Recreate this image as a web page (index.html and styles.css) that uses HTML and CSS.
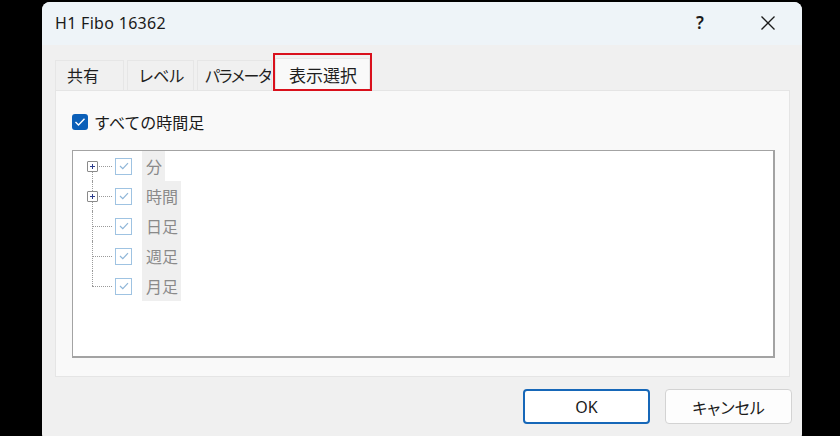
FILE: index.html
```html
<!DOCTYPE html>
<html lang="ja">
<head>
<meta charset="utf-8">
<title>H1 Fibo 16362</title>
<link rel="stylesheet" href="styles.css">
</head>
<body>
<div class="dialog">
  <div class="titlebar">
    <span class="title">H1 Fibo 16362</span>
    <span class="help">?</span>
    <span class="close">
      <svg width="16" height="16" viewBox="0 0 16 16"><path d="M1.5 1.5 L14.5 14.5 M14.5 1.5 L1.5 14.5" stroke="#1a1a1a" stroke-width="1.3" fill="none"/></svg>
    </span>
  </div>
  <div class="content">
    <div class="tabs">
      <div class="tab t1">共有</div>
      <div class="tab t2">レベル</div>
      <div class="tab t3">パラメータ</div>
      <div class="tab t4 active">表示選択<span class="mark"></span></div>
    </div>
    <div class="panel">
      <label class="all">
        <span class="cb-main">
          <svg width="12" height="10" viewBox="0 0 12 10"><path d="M1.5 5 L4.5 8 L10.5 1.8" stroke="#fff" stroke-width="1.4" fill="none"/></svg>
        </span>
        <span>すべての時間足</span>
      </label>
      <div class="tree">
        <div class="row first"><span class="conn"><span class="plus"></span></span><span class="cb"><svg width="10" height="8" viewBox="0 0 10 8"><path d="M1 4 L3.8 6.6 L9 1.2" stroke="#8fb6d8" stroke-width="1.2" fill="none"/></svg></span><span class="lbl">分</span></div>
        <div class="row"><span class="conn"><span class="plus"></span></span><span class="cb"><svg width="10" height="8" viewBox="0 0 10 8"><path d="M1 4 L3.8 6.6 L9 1.2" stroke="#8fb6d8" stroke-width="1.2" fill="none"/></svg></span><span class="lbl">時間</span></div>
        <div class="row"><span class="conn"></span><span class="cb"><svg width="10" height="8" viewBox="0 0 10 8"><path d="M1 4 L3.8 6.6 L9 1.2" stroke="#8fb6d8" stroke-width="1.2" fill="none"/></svg></span><span class="lbl">日足</span></div>
        <div class="row"><span class="conn"></span><span class="cb"><svg width="10" height="8" viewBox="0 0 10 8"><path d="M1 4 L3.8 6.6 L9 1.2" stroke="#8fb6d8" stroke-width="1.2" fill="none"/></svg></span><span class="lbl">週足</span></div>
        <div class="row last"><span class="conn"></span><span class="cb"><svg width="10" height="8" viewBox="0 0 10 8"><path d="M1 4 L3.8 6.6 L9 1.2" stroke="#8fb6d8" stroke-width="1.2" fill="none"/></svg></span><span class="lbl">月足</span></div>
      </div>
    </div>
    <div class="footer">
      <button class="btn ok">OK</button>
      <button class="btn">キャンセル</button>
    </div>
  </div>
</div>
</body>
</html>
```
FILE: styles.css
```css
* { box-sizing: border-box; }
html, body {
  margin: 0;
  padding: 0;
  background: #000;
  width: 840px;
  height: 436px;
  overflow: hidden;
}
body {
  font-family: "Noto Sans", "Noto Sans CJK JP", sans-serif;
  color: #1a1a1a;
}
.dialog {
  margin: 2px 0 0 42px;
  width: 760px;
  height: 440px;
  background: #f0f0f0;
  border-radius: 8px;
  overflow: hidden;
}
.titlebar {
  height: 43px;
  background: #eef4f8;
  display: flex;
  align-items: center;
  padding-left: 13px;
}
.title {
  font-size: 16px;
  letter-spacing: 0.3px;
  flex: 1;
  padding-bottom: 2px;
}
.help {
  font-size: 17px;
  font-weight: 600;
  width: 20px;
  text-align: center;
  padding-bottom: 2px;
}
.close {
  width: 16px;
  height: 16px;
  margin: 0 26px 2px 50px;
  display: flex;
}
.content {
  padding: 0 12px 0 13px;
}
.tabs {
  display: flex;
  gap: 3px;
  margin-top: 15px;
  height: 30px;
  align-items: flex-end;
}
.tab {
  height: 30px;
  font-family: "Noto Sans CJK JP", sans-serif;
  font-feature-settings: "palt";
  font-size: 16px;
  line-height: 29px;
  padding-left: 11px;
  white-space: nowrap;
  overflow: hidden;
  background: #f0f0f0;
  border: 1px solid #e6e6e6;
  border-bottom: none;
  color: #1f1f1f;
}
.t1 { width: 69px; }
.t2 { width: 67px; }
.t3 { width: 75px; padding-left: 7px; letter-spacing: -1.3px; }
.t4 {
  width: 95px;
  height: 32px;
  padding-left: 13px;
  line-height: 31px;
  font-size: 17px;
  background: #f9f9f9;
  position: relative;
  overflow: visible;
}
.mark {
  position: absolute;
  left: -3px;
  right: -3px;
  top: -6px;
  bottom: -1px;
  border: 2px solid #d9101c;
}
.panel {
  height: 287px;
  background: #f9f9f9;
  border: 1px solid #e5e5e5;
  padding: 22px 14px 0 16px;
}
.all {
  display: flex;
  align-items: center;
  gap: 6px;
  height: 18px;
  font-family: "Noto Sans CJK JP", sans-serif;
  font-size: 16px;
  color: #1a1a1a;
}
.cb-main {
  width: 16px;
  height: 16px;
  border-radius: 3px;
  background: #0b5fb8;
  display: flex;
  align-items: center;
  justify-content: center;
}
.tree {
  margin-top: 19px;
  height: 208px;
  background: #fff;
  border: 1px solid #a3a3a3;
  border-right-width: 2px;
  border-bottom-width: 2px;
  padding-top: 0;
}
.row {
  display: flex;
  align-items: center;
  height: 30px;
}
.conn {
  width: 42px;
  height: 30px;
  position: relative;
  flex: none;
}
.conn::before {
  content: "";
  position: absolute;
  left: 19px;
  top: 0;
  bottom: 0;
  border-left: 1px dotted #9a9a9a;
}
.row.first .conn::before { top: 15px; }
.row.last .conn::before { bottom: 15px; }
.conn::after {
  content: "";
  position: absolute;
  left: 19px;
  width: 20px;
  top: 15px;
  border-top: 1px dotted #9a9a9a;
}
.plus {
  position: absolute;
  left: 14px;
  top: 10px;
  width: 11px;
  height: 11px;
  background: #fff;
  border: 1px solid #8a8a8a;
  border-radius: 1px;
  z-index: 1;
}
.plus::before, .plus::after {
  content: "";
  position: absolute;
  background: #2d3e8c;
}
.plus::before { left: 2px; top: 4px; width: 5px; height: 1px; }
.plus::after { left: 4px; top: 2px; width: 1px; height: 5px; }
.cb {
  width: 17px;
  height: 17px;
  border: 1px solid #9fc3e2;
  background: #fff;
  display: flex;
  align-items: center;
  justify-content: center;
  flex: none;
}
.lbl {
  margin-left: 10px;
  height: 30px;
  line-height: 30px;
  padding: 0 3px 0 4px;
  background: #efefef;
  font-family: "Noto Sans CJK JP", sans-serif;
  font-size: 16px;
  color: #8a8a8a;
}
.footer {
  display: flex;
  justify-content: flex-end;
  gap: 15px;
  margin-top: 12px;
  margin-right: -2px;
}
.btn {
  width: 127px;
  height: 35px;
  border-radius: 4px;
  border: 1px solid #d3d3d3;
  background: #fdfdfd;
  font-family: "Noto Sans", "Noto Sans CJK JP", sans-serif;
  font-feature-settings: "palt";
  font-size: 16px;
  color: #1a1a1a;
  padding: 0;
}
.btn.ok {
  border: 2px solid #1667b8;
  background: #fff;
}
```
